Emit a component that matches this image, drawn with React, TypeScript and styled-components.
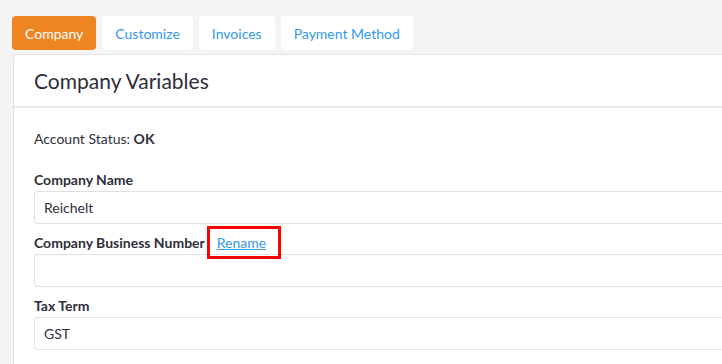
import styled, { createGlobalStyle } from "styled-components"

const Global = createGlobalStyle`
  html, body {
    margin: 0;
    padding: 0;
    background: #f4f4f4;
    font-family: Lato, "Noto Sans", sans-serif;
    color: #2e2e3a;
    overflow: hidden;
  }
`

const Page = styled.div`
  padding: 16px 0 0 12px;
  width: 722px;
  box-sizing: border-box;
`

const Tabs = styled.div`
  display: flex;
  gap: 6px;
  margin-bottom: 4px;
`

const Tab = styled.button<{ $active?: boolean }>`
  height: 34px;
  padding: 0 13px;
  border: none;
  border-radius: 4px;
  font-family: inherit;
  font-size: 14px;
  background: ${(p) => (p.$active ? "#ef8522" : "#ffffff")};
  color: ${(p) => (p.$active ? "#ffffff" : "#3399ee")};
  cursor: pointer;
`

const Card = styled.div`
  background: #fff;
  border: 1px solid #e3e3e3;
  border-right: none;
  border-radius: 4px 0 0 0;
  margin-left: 1px;
`

const CardHeader = styled.div`
  height: 51px;
  display: flex;
  align-items: center;
  padding: 0 20px;
  border-bottom: 2px solid #e8e9ec;
  font-size: 21px;
`

const CardBody = styled.div`
  padding: 21px 0 20px 20px;
`

const Status = styled.div`
  font-size: 14px;
  height: 20px;
  line-height: 20px;
  margin-bottom: 21px;
  b {
    font-weight: 700;
  }
`

const Field = styled.div`
  display: flex;
  flex-direction: column;
  margin-bottom: 9px;
`

const Label = styled.div`
  font-size: 14px;
  font-weight: 700;
  height: 20px;
  line-height: 20px;
  margin-bottom: 1px;
  display: flex;
  align-items: center;
  gap: 12px;
`

const Rename = styled.a`
  position: relative;
  font-weight: 400;
  color: #3399ee;
  text-decoration: underline;
  &::after {
    content: "";
    position: absolute;
    left: -10px;
    right: -15px;
    top: -7px;
    bottom: -6px;
    border: 3px solid #ff0000;
  }
`

const Input = styled.input`
  height: 33px;
  box-sizing: border-box;
  border: 1px solid #dfe1e6;
  border-right: none;
  border-radius: 4px 0 0 4px;
  padding: 0 9px;
  font-family: inherit;
  font-size: 14px;
  color: #2e2e3a;
  outline: none;
`

export default function App() {
  return (
    <Page>
      <Global />
      <Tabs>
        <Tab $active>Company</Tab>
        <Tab>Customize</Tab>
        <Tab>Invoices</Tab>
        <Tab>Payment Method</Tab>
      </Tabs>
      <Card>
        <CardHeader>Company Variables</CardHeader>
        <CardBody>
          <Status>
            Account Status: <b>OK</b>
          </Status>
          <Field>
            <Label>Company Name</Label>
            <Input defaultValue="Reichelt" />
          </Field>
          <Field>
            <Label>
              Company Business Number
              <Rename href="#">Rename</Rename>
            </Label>
            <Input defaultValue="" />
          </Field>
          <Field>
            <Label>Tax Term</Label>
            <Input defaultValue="GST" />
          </Field>
        </CardBody>
      </Card>
    </Page>
  )
}
